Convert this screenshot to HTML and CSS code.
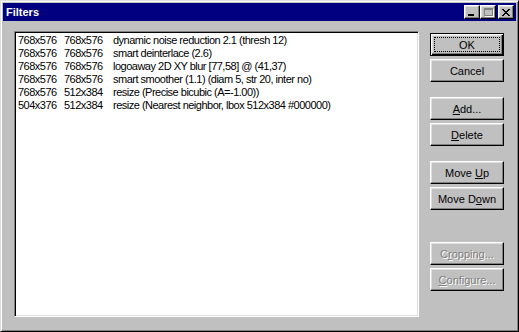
FILE: index.html
```html
<!DOCTYPE html>
<html lang="en">
<head>
  <meta charset="UTF-8" />
  <title>Filters</title>
  <link rel="stylesheet" href="styles.css">
</head>
<body>
  <div class="window">
    <div class="titlebar">
      <span class="title">Filters</span>
      <div class="caption-buttons">
        <span class="cap-btn cap-min"><span class="min-bar"></span></span>
        <span class="cap-btn cap-max"><span class="max-box"></span></span>
        <span class="cap-btn cap-close">
          <svg width="8" height="7" viewBox="0 0 8 7">
            <path d="M0 0h2v1h-2zM6 0h2v1h-2zM1 1h2v1h-2zM5 1h2v1h-2zM2 2h4v1h-4zM3 3h2v1h-2zM2 4h4v1h-4zM1 5h2v1h-2zM5 5h2v1h-2zM0 6h2v1h-2zM6 6h2v1h-2z" fill="#000"/>
          </svg>
        </span>
      </div>
    </div>

    <div class="dialog">
      <div class="listbox">
        <div class="row"><span class="c1">768x576</span><span class="c2">768x576</span><span>dynamic noise reduction 2.1 (thresh 12)</span></div>
        <div class="row"><span class="c1">768x576</span><span class="c2">768x576</span><span>smart deinterlace (2.6)</span></div>
        <div class="row"><span class="c1">768x576</span><span class="c2">768x576</span><span>logoaway 2D XY blur [77,58] @ (41,37)</span></div>
        <div class="row"><span class="c1">768x576</span><span class="c2">768x576</span><span>smart smoother (1.1) (diam 5, str 20, inter no)</span></div>
        <div class="row"><span class="c1">768x576</span><span class="c2">512x384</span><span>resize (Precise bicubic (A=-1.00))</span></div>
        <div class="row"><span class="c1">504x376</span><span class="c2">512x384</span><span>resize (Nearest neighbor, lbox 512x384 #000000)</span></div>
      </div>

      <div class="buttons">
        <button class="btn btn-default"><span class="focus">OK</span></button>
        <button class="btn gap-s">Cancel</button>
        <button class="btn gap-l"><u>A</u>dd...</button>
        <button class="btn gap-s"><u>D</u>elete</button>
        <button class="btn gap-l">Move <u>U</u>p</button>
        <button class="btn gap-s">Move D<u>o</u>wn</button>
        <button class="btn gap-xl" disabled>C<u>r</u>opping...</button>
        <button class="btn gap-s" disabled><u>C</u>onfigure...</button>
      </div>
    </div>
  </div>
</body>
</html>
```

FILE: styles.css
```css
body {
  margin: 0;
  background: #c0c0c0;
  font-family: "Liberation Sans", Arial, sans-serif;
  font-size: 11px;
}
.window {
  box-sizing: border-box;
  width: 519px;
  height: 332px;
  background: #c0c0c0;
  border: 1px solid;
  border-color: #dfdfdf #000 #000 #dfdfdf;
  box-shadow: inset 1px 1px #fff, inset -1px -1px #808080;
  padding: 2px;
  display: flex;
  flex-direction: column;
}
.titlebar {
  height: 18px;
  background: #000080;
  display: flex;
  align-items: center;
  justify-content: space-between;
  padding: 0 2px 0 3px;
}
.title {
  color: #fff;
  font-weight: bold;
  font-size: 11px;
}
.caption-buttons {
  display: flex;
}
.cap-btn {
  box-sizing: border-box;
  width: 16px;
  height: 14px;
  background: #c0c0c0;
  border: 1px solid;
  border-color: #fff #000 #000 #fff;
  box-shadow: inset -1px -1px #808080, inset 1px 1px #dfdfdf;
  display: flex;
  align-items: center;
  justify-content: center;
  position: relative;
}
.cap-close {
  margin-left: 2px;
}
.min-bar {
  position: absolute;
  left: 3px;
  bottom: 2px;
  width: 6px;
  height: 2px;
  background: #000;
}
.max-box {
  box-sizing: border-box;
  width: 9px;
  height: 8px;
  border: 1px solid #808080;
  border-top-width: 2px;
  box-shadow: 1px 1px #fff;
}
.dialog {
  flex: 1;
  display: flex;
  padding: 10px 12px 12px 11px;
  gap: 11px;
}
.listbox {
  flex: 1;
  background: #fff;
  border: 1px solid;
  border-color: #808080 #fff #fff #808080;
  box-shadow: inset 1px 1px #000, inset -1px -1px #dfdfdf;
  padding: 2px 3px;
}
.row {
  line-height: 13px;
  white-space: nowrap;
  color: #000;
  letter-spacing: -0.5px;
}
.c1, .c2 {
  display: inline-block;
}
.c1 {
  width: 46px;
}
.c2 {
  width: 49px;
}
.buttons {
  width: 74px;
  display: flex;
  flex-direction: column;
  padding-top: 2px;
}
.btn {
  box-sizing: border-box;
  height: 23px;
  width: 74px;
  padding: 0;
  background: #c0c0c0;
  font-family: "Liberation Sans", Arial, sans-serif;
  font-size: 11px;
  color: #000;
  border: 1px solid;
  border-color: #fff #000 #000 #fff;
  box-shadow: inset -1px -1px #808080, inset 1px 1px #dfdfdf;
}
.btn-default {
  border: 1px solid #000;
  box-shadow: inset 1px 1px #fff, inset -1px -1px #000, inset -2px -2px #808080, inset 2px 2px #dfdfdf;
  padding: 3px;
}
.focus {
  display: flex;
  align-items: center;
  justify-content: center;
  height: 100%;
  border: 1px dotted #000;
  box-sizing: border-box;
}
.btn:disabled {
  color: #808080;
  text-shadow: 1px 1px 0 #fff;
}
.gap-s {
  margin-top: 3px;
}
.gap-l {
  margin-top: 15px;
}
.gap-xl {
  margin-top: 32px;
}
```
